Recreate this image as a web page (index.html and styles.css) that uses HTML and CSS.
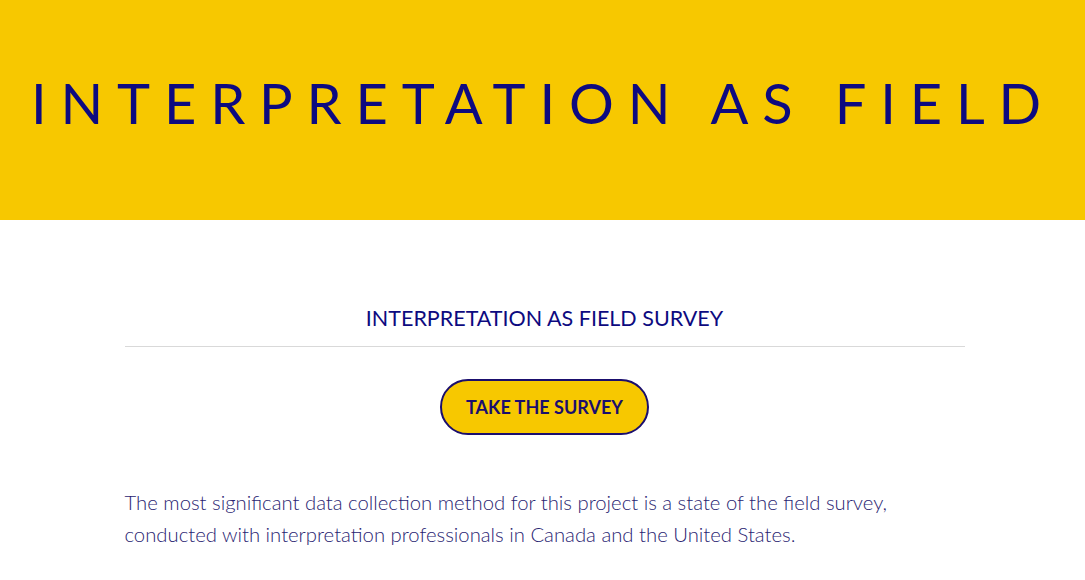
FILE: index.html
```html
<!DOCTYPE html>
<html lang="en">
<head>
<meta charset="utf-8">
<title>Interpretation as Field</title>
<link rel="stylesheet" href="styles.css">
</head>
<body>
<header class="hero">
  <h1 class="hero-title">INTERPRETATION AS FIELD</h1>
</header>
<main class="content">
  <h2 class="section-title">INTERPRETATION AS FIELD SURVEY</h2>
  <div class="cta-row">
    <a class="cta" href="#">TAKE THE SURVEY</a>
  </div>
  <p class="lead">The most significant data collection method for this project is a state of the field survey, conducted with interpretation professionals in Canada and the United States.</p>
</main>
</body>
</html>
```
FILE: styles.css
```css
html, body {
  margin: 0;
  padding: 0;
  background: #ffffff;
  font-family: Lato, "Open Sans", sans-serif;
  color: #100c7c;
}
.hero {
  background: #f7c800;
  height: 220px;
  display: flex;
  align-items: center;
  justify-content: center;
  overflow: hidden;
}
.hero-title {
  margin: 0;
  font-weight: 400;
  font-size: 56px;
  letter-spacing: 13.85px;
  white-space: nowrap;
  color: #0d0a80;
  line-height: 1;
  padding-bottom: 14px;
  padding-left: 1px;
}
.content {
  width: 840px;
  margin: 0 0 0 calc(50% - 418px);
  padding-top: 85px;
}
.section-title {
  margin: 0;
  text-align: center;
  font-weight: 400;
  font-size: 21.5px;
  line-height: 26px;
  padding-bottom: 15px;
  border-bottom: 1px solid #d9d9d9;
  color: #0d0a80;
}
.cta-row {
  display: flex;
  justify-content: center;
  padding-top: 32px;
}
.cta {
  display: flex;
  align-items: center;
  justify-content: center;
  box-sizing: border-box;
  width: 209px;
  height: 56px;
  border: 2px solid #1a0e6e;
  border-radius: 28px;
  background: #f7c800;
  color: #1a0e6e;
  font-weight: 700;
  font-size: 18px;
  text-decoration: none;
}
.lead {
  margin: 51px 0 0;
  font-size: 20.3px;
  line-height: 32px;
  font-weight: 300;
  color: #2a2572;
}
```
